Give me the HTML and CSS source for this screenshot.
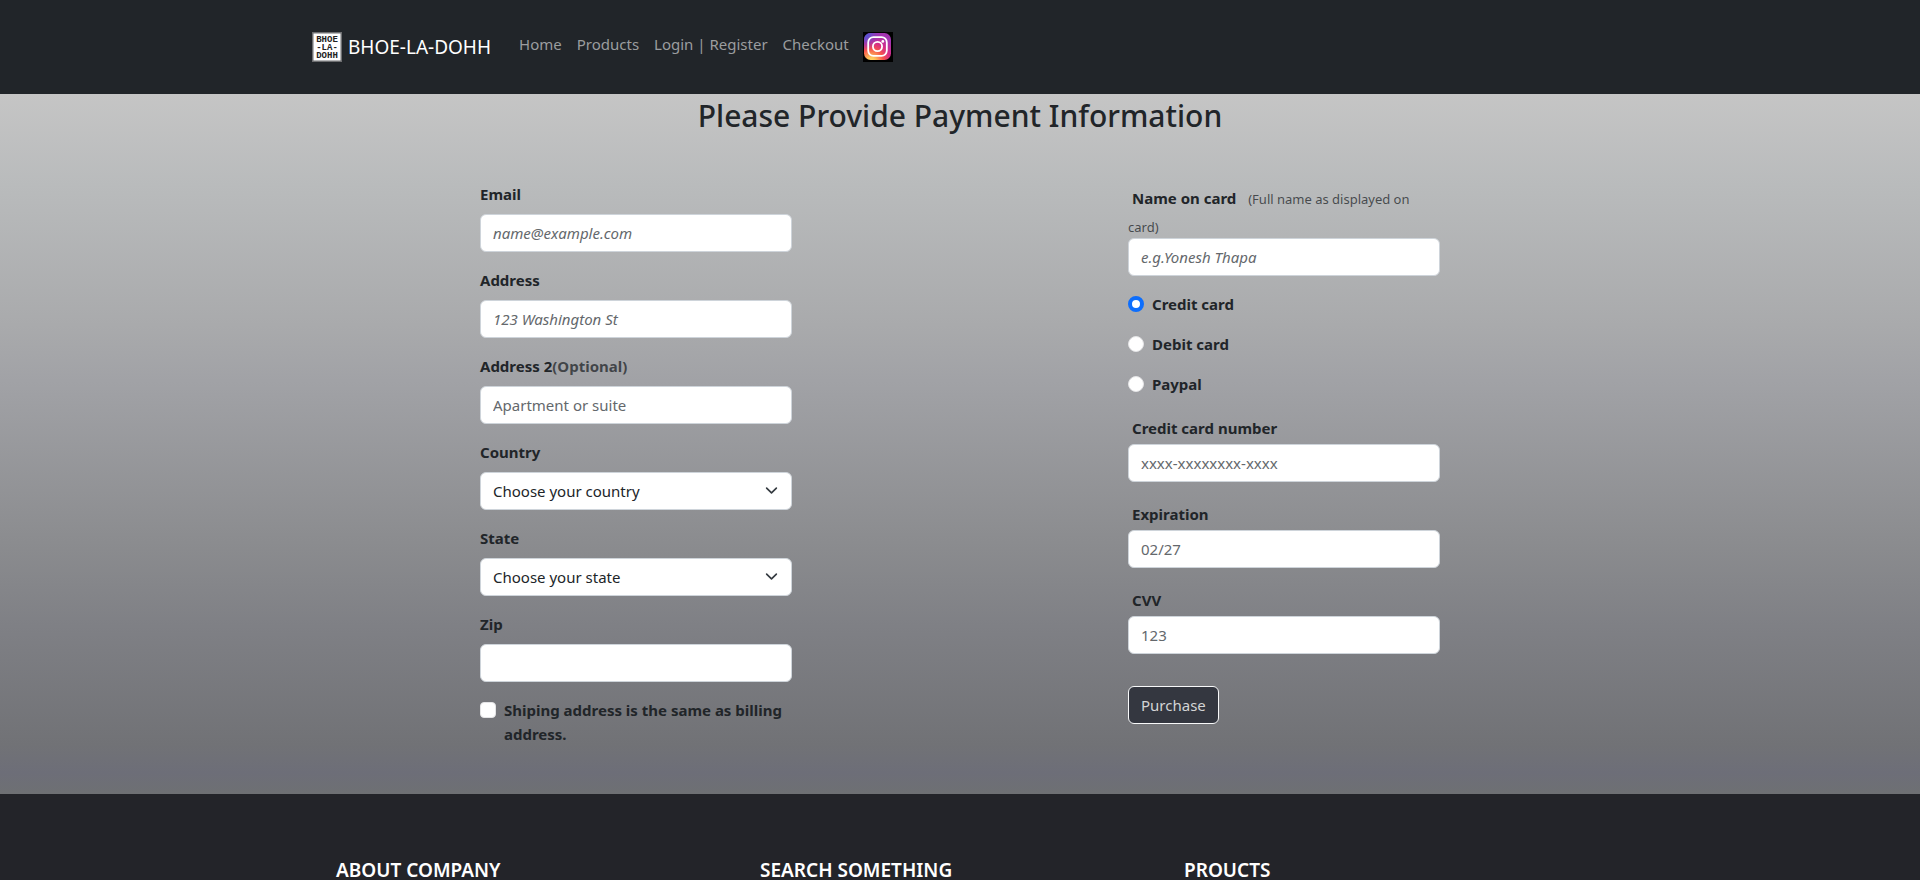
FILE: index.html
```html
<!DOCTYPE html>
<html lang="en">
<head>
<meta charset="utf-8">
<meta name="viewport" content="width=device-width, initial-scale=1">
<title>Payment</title>
<link rel="stylesheet" href="styles.css">
</head>
<body>
<header class="site-header">
  <nav class="navbar">
    <a class="brand" href="#">
      <svg class="badge" viewBox="0 0 30 30" aria-hidden="true">
        <rect width="30" height="30" fill="#6d6e70"/>
        <rect x="1.5" y="1.5" width="27" height="27" fill="#fff"/>
        <g class="badge-text">
          <text x="15" y="10" text-anchor="middle">BHOE</text>
          <text x="15" y="18" text-anchor="middle">-LA-</text>
          <text x="15" y="26" text-anchor="middle">DOHH</text>
        </g>
      </svg>
      <span>BHOE-LA-DOHH</span>
    </a>
    <ul class="nav-list">
      <li><a class="nav-link" href="#">Home</a></li>
      <li><a class="nav-link" href="#">Products</a></li>
      <li><a class="nav-link" href="#">Login | Register</a></li>
      <li><a class="nav-link" href="#">Checkout</a></li>
    </ul>
    <a class="social" href="#" aria-label="Instagram">
      <svg class="badge" viewBox="0 0 30 30" aria-hidden="true">
        <defs>
          <radialGradient id="ig-warm" cx="0.27" cy="1.05" r="1">
            <stop offset="0" stop-color="#ffdd6b"/>
            <stop offset="0.15" stop-color="#fdc55a"/>
            <stop offset="0.45" stop-color="#f7554b"/>
            <stop offset="0.7" stop-color="#d52c86"/>
            <stop offset="1" stop-color="#a334b0"/>
          </radialGradient>
          <radialGradient id="ig-cool" cx="0" cy="0" r="0.65">
            <stop offset="0" stop-color="#3b62d8"/>
            <stop offset="0.3" stop-color="#5a52cf" stop-opacity="0.9"/>
            <stop offset="1" stop-color="#8a3ac8" stop-opacity="0"/>
          </radialGradient>
        </defs>
        <rect width="30" height="30" fill="#000"/>
        <rect x="1" y="1" width="27" height="27" rx="6.5" fill="url(#ig-warm)"/>
        <rect x="1" y="1" width="27" height="27" rx="6.5" fill="url(#ig-cool)"/>
        <g fill="none" stroke="#fff" stroke-width="1.8">
          <rect x="5.2" y="5.2" width="18.6" height="18.6" rx="5.2"/>
          <circle cx="14.5" cy="14.5" r="4.6"/>
        </g>
        <circle cx="19.8" cy="9.4" r="1.4" fill="#fff"/>
      </svg>
    </a>
  </nav>
</header>

<main class="payment">
  <h2 class="page-title">Please Provide Payment Information</h2>
  <form class="payment-form">
    <div class="billing">
      <div class="field">
        <label for="email">Email</label>
        <input class="control italic" id="email" type="email" placeholder="name@example.com">
      </div>
      <div class="field">
        <label for="address">Address</label>
        <input class="control italic" id="address" type="text" placeholder="123 Washington St">
      </div>
      <div class="field">
        <label for="address2">Address 2<span class="muted">(Optional)</span></label>
        <input class="control" id="address2" type="text" placeholder="Apartment or suite">
      </div>
      <div class="field">
        <label for="country">Country</label>
        <div class="select-wrap">
          <select class="control" id="country"><option>Choose your country</option></select>
          <svg class="chevron" viewBox="0 0 16 16" aria-hidden="true"><path d="m2 5 6 6 6-6"/></svg>
        </div>
      </div>
      <div class="field">
        <label for="state">State</label>
        <div class="select-wrap">
          <select class="control" id="state"><option>Choose your state</option></select>
          <svg class="chevron" viewBox="0 0 16 16" aria-hidden="true"><path d="m2 5 6 6 6-6"/></svg>
        </div>
      </div>
      <div class="field">
        <label for="zip">Zip</label>
        <input class="control" id="zip" type="text">
      </div>
      <div class="check">
        <input id="same" type="checkbox">
        <label for="same">Shiping address is the same as billing address.</label>
      </div>
    </div>

    <div class="card">
      <div class="card-field">
        <div class="name-line">
          <label for="card-name">Name on card</label>
          <small class="muted">(Full name as displayed on card)</small>
        </div>
        <input class="control italic" id="card-name" type="text" placeholder="e.g.Yonesh Thapa">
      </div>
      <div class="check">
        <input id="credit" type="radio" name="method" checked>
        <label for="credit">Credit card</label>
      </div>
      <div class="check">
        <input id="debit" type="radio" name="method">
        <label for="debit">Debit card</label>
      </div>
      <div class="check">
        <input id="paypal" type="radio" name="method">
        <label for="paypal">Paypal</label>
      </div>
      <div class="card-field">
        <label for="number">Credit card number</label>
        <input class="control" id="number" type="text" placeholder="xxxx-xxxxxxxx-xxxx">
      </div>
      <div class="card-field">
        <label for="expiration">Expiration</label>
        <input class="control" id="expiration" type="text" placeholder="02/27">
      </div>
      <div class="card-field">
        <label for="cvv">CVV</label>
        <input class="control" id="cvv" type="text" placeholder="123">
      </div>
      <button class="purchase" type="submit">Purchase</button>
    </div>
  </form>
</main>

<footer class="site-footer">
  <div class="footer-columns">
    <h5>ABOUT COMPANY</h5>
    <h5>SEARCH SOMETHING</h5>
    <h5>PROUCTS</h5>
  </div>
</footer>
</body>
</html>
```
FILE: styles.css
```css
* {
  box-sizing: border-box;
}

body {
  margin: 0;
  background: #232429;
  color: #212529;
  font-family: "Noto Sans", "Open Sans", sans-serif;
  font-size: 15px;
  line-height: 24px;
}

.site-header {
  background: #212529;
  padding: 32px 24px;
}

.navbar {
  display: flex;
  align-items: flex-start;
  max-width: 1296px;
  margin: 0 auto;
}

.brand {
  display: flex;
  gap: 6px;
  margin-right: 28px;
  color: #fff;
  font-size: 19px;
  line-height: 30px;
  text-decoration: none;
}

.badge {
  display: block;
  width: 30px;
  height: 30px;
}

.badge-text {
  fill: #222;
  font-family: "Liberation Sans Narrow", "Liberation Mono", monospace;
  font-size: 9px;
  font-weight: 700;
}

.nav-list {
  display: flex;
  gap: 15px;
  margin: 0 14px 0 0;
  padding: 0;
  list-style: none;
}

.nav-link {
  color: #9b9d9f;
  text-decoration: none;
}

.payment {
  padding: 4px 0 48px;
  background: linear-gradient(#c5c5c5, #b9bbbc 13%, #a9aaac 33%, #a1a2a6 41%, #8b8c8f 64%, #7f8085 76%, #717276 93%, #6d6e78 97%, #6e7073);
}

.page-title {
  margin: 0 0 48px;
  font-size: 30px;
  font-weight: 500;
  line-height: 36px;
  text-align: center;
}

.payment-form {
  display: grid;
  grid-template-columns: repeat(3, 1fr);
  gap: 12px;
  width: 50%;
  margin: 0 auto;
}

.billing,
.card {
  display: flex;
  flex-direction: column;
  gap: 16px;
}

.card {
  grid-column: 3;
}

label {
  font-weight: 700;
}

.field {
  display: flex;
  flex-direction: column;
  gap: 8px;
}

.card-field label {
  display: inline-block;
  padding: 4px;
}

.name-line small {
  margin-left: 4px;
  font-size: 13px;
  line-height: 20px;
}

.muted {
  color: rgba(33, 37, 41, 0.75);
}

.control {
  display: block;
  width: 100%;
  height: 38px;
  padding: 6px 12px;
  border: 1px solid #ced4da;
  border-radius: 6px;
  background: #fff;
  color: #212529;
  font: inherit;
  appearance: none;
}

.control::placeholder {
  color: #64686c;
  opacity: 1;
}

.italic::placeholder {
  font-style: italic;
}

.select-wrap {
  position: relative;
}

.chevron {
  position: absolute;
  top: 12px;
  right: 14px;
  width: 13px;
  height: 13px;
  fill: none;
  stroke: #343a40;
  stroke-width: 2;
  stroke-linecap: round;
  stroke-linejoin: round;
  pointer-events: none;
}

.check {
  display: flex;
  align-items: flex-start;
  gap: 8px;
}

.check input {
  flex: none;
  width: 16px;
  height: 16px;
  margin: 4px 0 0;
  border: 1px solid #e4e4e6;
  border-radius: 4px;
  background: #fff;
  appearance: none;
}

.check input[type="radio"] {
  border-radius: 50%;
}

.check input[type="radio"]:checked {
  border: 4px solid #0d6efd;
}

.purchase {
  align-self: flex-start;
  height: 38px;
  margin-top: 16px;
  padding: 6px 12px;
  border: 1px solid #f8f9fa;
  border-radius: 6px;
  background: #343740;
  color: #d3d4d5;
  font: inherit;
}

.site-footer {
  padding: 66px 24px 0;
  background: #232429;
}

.footer-columns {
  display: grid;
  grid-template-columns: repeat(3, 1fr);
  max-width: 1272px;
  margin: 0 auto;
}

.footer-columns h5 {
  margin: 0;
  padding-left: 12px;
  color: #fff;
  font-size: 19px;
  font-weight: 600;
  line-height: 20px;
}
```
